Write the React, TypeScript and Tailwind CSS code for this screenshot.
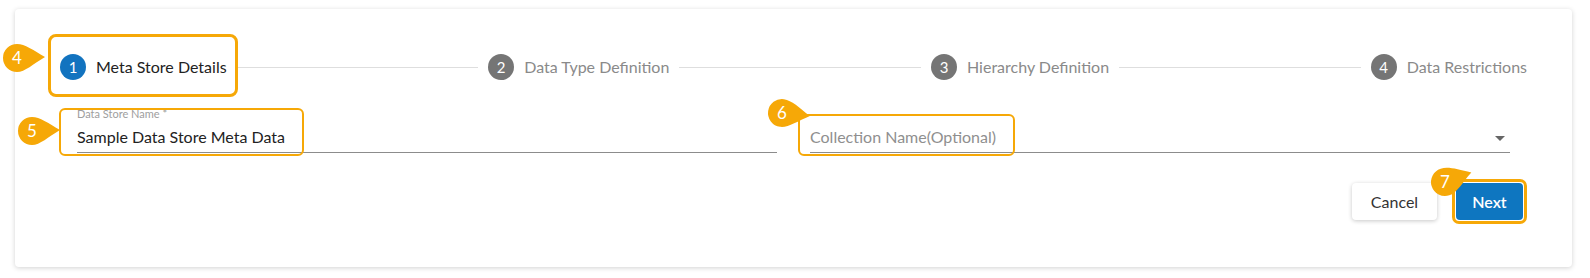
import React from 'react';

const font = { fontFamily: 'Lato, "Open Sans", sans-serif' };

const Badge: React.FC<{ n: number; className: string; tilt?: string }> = ({ n, className, tilt = '' }) => (
  <div className={`absolute z-20 w-[42px] h-[28px] ${className}`}>
    <svg width="42" height="28" viewBox="0 0 42 28" className={`absolute left-0 top-0 overflow-visible origin-[14px_14px] ${tilt}`}>
      <path d="M14 0 C22 0 30 6 42 13 C30 20 22 28 14 28 A14 14 0 0 1 14 0 Z" fill="#f6a807" />
    </svg>
    <span className="absolute left-0 top-0 w-[28px] h-[28px] flex items-center justify-center text-white text-[17px]">
      {n}
    </span>
  </div>
);

const steps = ['Meta Store Details', 'Data Type Definition', 'Hierarchy Definition', 'Data Restrictions'];

export default function App() {
  return (
    <div className="w-[1590px] h-[278px] bg-white pt-[9px] pl-[15px]" style={font}>
      <div className="relative w-[1557px] h-[258px] bg-white rounded-[4px] shadow-[0_1px_5px_rgba(0,0,0,0.18)] pt-[45px]">
        {/* stepper */}
        <div className="flex items-center px-[35px]">
          {steps.map((label, i) => (
            <React.Fragment key={label}>
              {i > 0 && <div className="flex-1 h-px bg-[#dedede]" />}
              <div className="relative flex items-center gap-[10px] px-[10px] h-[26px]">
                <span
                  className={`w-[26px] h-[26px] rounded-full flex items-center justify-center text-white text-[15px] ${
                    i === 0 ? 'bg-[#1273bf]' : 'bg-[#757575]'
                  }`}
                >
                  {i + 1}
                </span>
                <span className={`text-[16px] whitespace-nowrap ${i === 0 ? 'text-[#222]' : 'text-[#8a8a8a]'}`}>
                  {label}
                </span>
                {i === 0 && (
                  <>
                    <span className="absolute -left-[2px] -right-[1px] -top-[20px] -bottom-[17px] border-[3px] border-[#f6a807] rounded-[8px]" />
                    <Badge n={4} className="-left-[47px] -top-[10px]" />
                  </>
                )}
              </div>
            </React.Fragment>
          ))}
        </div>

        {/* fields */}
        <div className="grid grid-cols-2 gap-[33px] px-[62px] mt-[27px]">
          <div className="relative">
            <div className="h-[14px] text-[11px] leading-[14px] text-[#9e9e9e]">Data Store Name *</div>
            <div className="h-[32px] flex items-center border-b border-[#8c8c8c] text-[16px] text-[#222]">
              Sample Data Store Meta Data
            </div>
            <span className="absolute -left-[18px] top-[1px] w-[245px] h-[48px] border-2 border-[#f6a807] rounded-[6px]" />
            <Badge n={5} className="-left-[59px] top-[10px]" />
          </div>
          <div className="relative">
            <div className="h-[14px]" />
            <div className="h-[32px] flex items-center justify-between border-b border-[#8c8c8c] text-[16px] text-[#8f8f8f]">
              <span>Collection Name(Optional)</span>
              <svg width="24" height="24" viewBox="0 0 24 24" className="-mr-[2px] mt-[2px]">
                <path d="M7 10l5 5 5-5z" fill="#666" />
              </svg>
            </div>
            <span className="absolute -left-[12px] top-[7px] w-[217px] h-[42px] border-2 border-[#f6a807] rounded-[6px]" />
            <Badge n={6} className="-left-[42px] -top-[8px]" tilt="rotate-[8deg]" />
          </div>
        </div>

        {/* actions */}
        <div className="flex justify-end gap-[19px] pr-[49px] mt-[30px]">
          <button className="w-[85px] h-[37px] rounded-[4px] bg-white text-[16px] text-[#333] shadow-[0_1px_4px_rgba(0,0,0,0.22)]">
            Cancel
          </button>
          <div className="relative">
            <button className="w-[67px] h-[37px] rounded-[4px] bg-[#0e76c0] text-[16px] font-semibold text-white">
              Next
            </button>
            <span className="absolute -left-[4px] -right-[4px] -top-[4px] -bottom-[4px] border-[3px] border-[#f6a807] rounded-[7px]" />
            <Badge n={7} className="-left-[25px] -top-[15px]" tilt="-rotate-[18deg]" />
          </div>
        </div>
      </div>
    </div>
  );
}
